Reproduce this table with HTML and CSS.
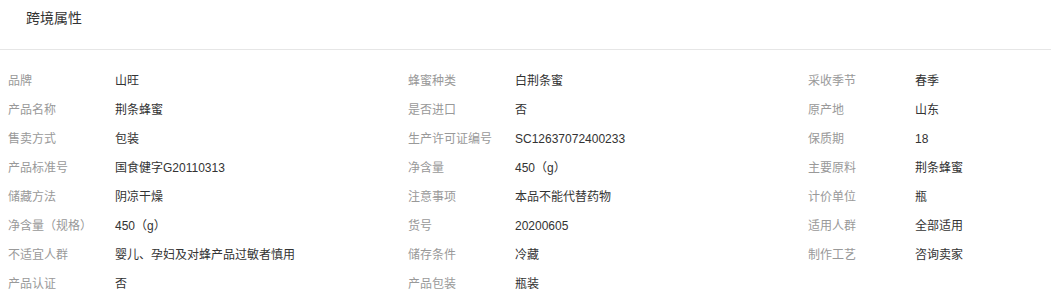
FILE: index.html
```html
<!DOCTYPE html>
<html lang="zh">
<head>
    <meta charset="UTF-8">
    <meta name="viewport" content="width=device-width, initial-scale=1.0">
    <title>跨境属性</title>
    <link rel="stylesheet" href="styles.css">
</head>
<body>
    <div class="panel">
        <div class="panel-title">跨境属性</div>

        <ul class="attr-list">
            <li><span class="attr-name">品牌</span><span class="attr-value">山旺</span></li>
            <li><span class="attr-name">蜂蜜种类</span><span class="attr-value">白荆条蜜</span></li>
            <li><span class="attr-name">采收季节</span><span class="attr-value">春季</span></li>

            <li><span class="attr-name">产品名称</span><span class="attr-value">荆条蜂蜜</span></li>
            <li><span class="attr-name">是否进口</span><span class="attr-value">否</span></li>
            <li><span class="attr-name">原产地</span><span class="attr-value">山东</span></li>

            <li><span class="attr-name">售卖方式</span><span class="attr-value">包装</span></li>
            <li><span class="attr-name">生产许可证编号</span><span class="attr-value">SC12637072400233</span></li>
            <li><span class="attr-name">保质期</span><span class="attr-value">18</span></li>

            <li><span class="attr-name">产品标准号</span><span class="attr-value">国食健字G20110313</span></li>
            <li><span class="attr-name">净含量</span><span class="attr-value">450（g）</span></li>
            <li><span class="attr-name">主要原料</span><span class="attr-value">荆条蜂蜜</span></li>

            <li><span class="attr-name">储藏方法</span><span class="attr-value">阴凉干燥</span></li>
            <li><span class="attr-name">注意事项</span><span class="attr-value">本品不能代替药物</span></li>
            <li><span class="attr-name">计价单位</span><span class="attr-value">瓶</span></li>

            <li><span class="attr-name">净含量（规格）</span><span class="attr-value">450（g）</span></li>
            <li><span class="attr-name">货号</span><span class="attr-value">20200605</span></li>
            <li><span class="attr-name">适用人群</span><span class="attr-value">全部适用</span></li>

            <li><span class="attr-name">不适宜人群</span><span class="attr-value">婴儿、孕妇及对蜂产品过敏者慎用</span></li>
            <li><span class="attr-name">储存条件</span><span class="attr-value">冷藏</span></li>
            <li><span class="attr-name">制作工艺</span><span class="attr-value">咨询卖家</span></li>

            <li><span class="attr-name">产品认证</span><span class="attr-value">否</span></li>
            <li><span class="attr-name">产品包装</span><span class="attr-value">瓶装</span></li>
        </ul>
    </div>
</body>
</html>
```

FILE: styles.css
```css
* {
    margin: 0;
    padding: 0;
    box-sizing: border-box;
}

body {
    background: #fff;
    font-family: "Liberation Sans", "Noto Sans CJK SC", sans-serif;
    color: #333;
}

/* 标题栏 */
.panel-title {
    height: 50px;
    padding: 8px 26px 0;
    line-height: 20px;
    font-size: 14px;
    color: #333;
    border-bottom: 1px solid #e6e6e6;
}

/* 属性列表 - 三列 */
.attr-list {
    list-style: none;
    display: grid;
    grid-template-columns: 400px 400px 1fr;
    padding: 17px 0 0;
}
.attr-list li {
    display: flex;
    height: 29px;
    line-height: 29px;
    font-size: 12px;
    padding-left: 8px;
    white-space: nowrap;
    overflow: hidden;
}
.attr-name {
    width: 107px;
    flex-shrink: 0;
    color: #999;
}
.attr-value {
    color: #333;
}
```
